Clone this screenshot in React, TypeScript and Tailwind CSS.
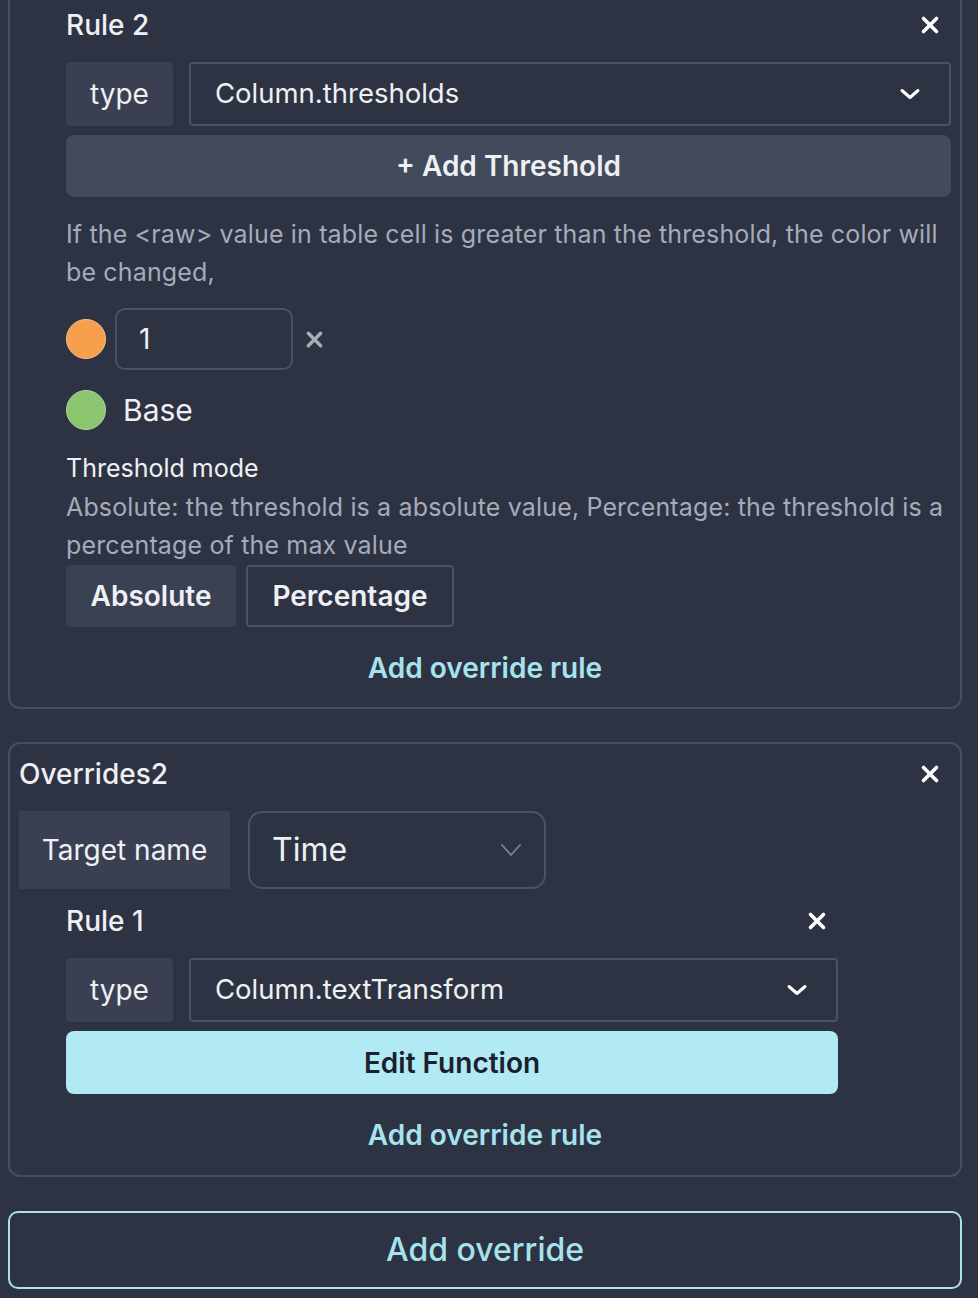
import React from 'react';

const CloseIcon = ({ size = 20, color = '#ffffff' }: { size?: number; color?: string }) => (
  <svg width={size} height={size} viewBox="0 0 20 20" fill="none">
    <path d="M3.5 3.5 L16.5 16.5 M16.5 3.5 L3.5 16.5" stroke={color} strokeWidth="3.6" strokeLinecap="round" />
  </svg>
);

const Chevron = () => (
  <svg width="22" height="14" viewBox="0 0 22 14" fill="none">
    <path d="M3 3.5 L11 10.5 L19 3.5" stroke="#ffffff" strokeWidth="3" strokeLinecap="round" strokeLinejoin="round" />
  </svg>
);

const ThinChevron = () => (
  <svg width="22" height="14" viewBox="0 0 22 14" fill="none">
    <path d="M2 2 L11 12 L20 2" stroke="#7c8394" strokeWidth="1.8" strokeLinecap="round" strokeLinejoin="round" />
  </svg>
);

const TypeRow = ({ value }: { value: string }) => (
  <div className="flex h-[64px] gap-4">
    <div className="flex w-[107px] items-center justify-center rounded-sm bg-[#3a4052] text-[28px] text-[#eef0f4]">
      type
    </div>
    <div className="flex flex-1 items-center justify-between rounded-sm border-2 border-[#4b5264] pl-[24px] pr-[28px] text-[27.5px] text-[#eef0f4]">
      <span>{value}</span>
      <Chevron />
    </div>
  </div>
);

const RuleHeader = ({ title }: { title: string }) => (
  <div className="flex h-[50px] items-center justify-between pr-[11px]">
    <span className="text-[28px] font-medium text-[#eef0f4]">{title}</span>
    <CloseIcon />
  </div>
);

const AddRuleLink = () => (
  <div className="flex h-[40px] items-center justify-center text-[28px] font-semibold text-[#a6e3ef]">
    Add override rule
  </div>
);

export default function App() {
  return (
    <div className="min-h-screen w-[978px] bg-[#2e3343] px-2 pr-4 font-['Inter','Liberation_Sans',sans-serif]">
      {/* override 1, top cut off */}
      <div className="rounded-b-xl border-2 border-t-0 border-[#474e60] px-[9px] pb-[19px]">
        <div className="ml-[47px]">
          <RuleHeader title="Rule 2" />
          <div className="mt-3">
            <TypeRow value="Column.thresholds" />
          </div>
          <button className="mt-[9px] flex h-[62px] w-full items-center justify-center rounded-lg bg-[#434a5b] text-[28px] font-semibold text-[#eef0f4]">
            + Add Threshold
          </button>
          <p className="mt-[18px] text-[25px] leading-[38px] tracking-[0.15px] text-[#a4abb9]">
            If the &lt;raw&gt; value in table cell is greater than the threshold, the color will be changed,
          </p>
          <div className="mt-[17px] flex items-center gap-[9px]">
            <span className="h-[40px] w-[40px] rounded-full border border-[#f8c08a] bg-[#f6a04d]" />
            <div className="flex h-[62px] w-[178px] items-center rounded-[10px] border-2 border-[#4b5264] pl-[22px] text-[28px] text-[#eef0f4]">
              1
            </div>
            <span className="ml-[3px]">
              <CloseIcon size={19} color="#a8adb8" />
            </span>
          </div>
          <div className="mt-[10px] flex h-[60px] items-center gap-[17px]">
            <span className="h-[40px] w-[40px] rounded-full border border-[#a9d996] bg-[#8bc56f]" />
            <span className="text-[30px] text-[#eef0f4]">Base</span>
          </div>
          <div className="mt-[9px] text-[25px] leading-[38px] text-[#eef0f4]">Threshold mode</div>
          <p className="mt-[1px] text-[25px] leading-[38px] tracking-[0.15px] text-[#a4abb9]">
            Absolute: the threshold is a absolute value, Percentage: the threshold is a percentage of the max value
          </p>
          <div className="mt-[1px] flex h-[62px] gap-[10px]">
            <button className="w-[170px] rounded-sm bg-[#3a4152] text-[28px] font-semibold text-[#eef0f4]">
              Absolute
            </button>
            <button className="w-[208px] rounded-sm border-2 border-[#4b5264] text-[28px] font-semibold text-[#eef0f4]">
              Percentage
            </button>
          </div>
        </div>
        <div className="mt-[21px]">
          <AddRuleLink />
        </div>
      </div>

      {/* overrides 2 */}
      <div className="mt-[33px] rounded-xl border-2 border-[#474e60] px-[9px] pb-[20px]">
        <div className="flex h-[60px] items-center justify-between pr-[11px]">
          <span className="text-[28px] font-medium text-[#eef0f4]">Overrides2</span>
          <CloseIcon />
        </div>
        <div className="mt-[7px] flex h-[78px] gap-[18px]">
          <div className="flex w-[211px] items-center justify-center bg-[#3a4052] text-[28px] text-[#eef0f4]">
            Target name
          </div>
          <div className="flex w-[298px] items-center justify-between rounded-[14px] border-2 border-[#4b5264] pl-[22px] pr-[22px] text-[32px] text-[#eef0f4]">
            <span>Time</span>
            <ThinChevron />
          </div>
        </div>
        <div className="ml-[47px] mt-[7px] w-[772px]">
          <RuleHeader title="Rule 1" />
          <div className="mt-3">
            <TypeRow value="Column.textTransform" />
          </div>
          <button className="mt-[9px] flex h-[63px] w-full items-center justify-center rounded-lg bg-[#b1e9f4] text-[28px] font-semibold text-[#1a202c]">
            Edit Function
          </button>
        </div>
        <div className="mt-[21px]">
          <AddRuleLink />
        </div>
      </div>

      <button className="mt-[34px] flex h-[78px] w-full items-center justify-center rounded-[10px] border-2 border-[#a6e3ef] text-[32px] font-medium text-[#a6e3ef]">
        Add override
      </button>
    </div>
  );
}
